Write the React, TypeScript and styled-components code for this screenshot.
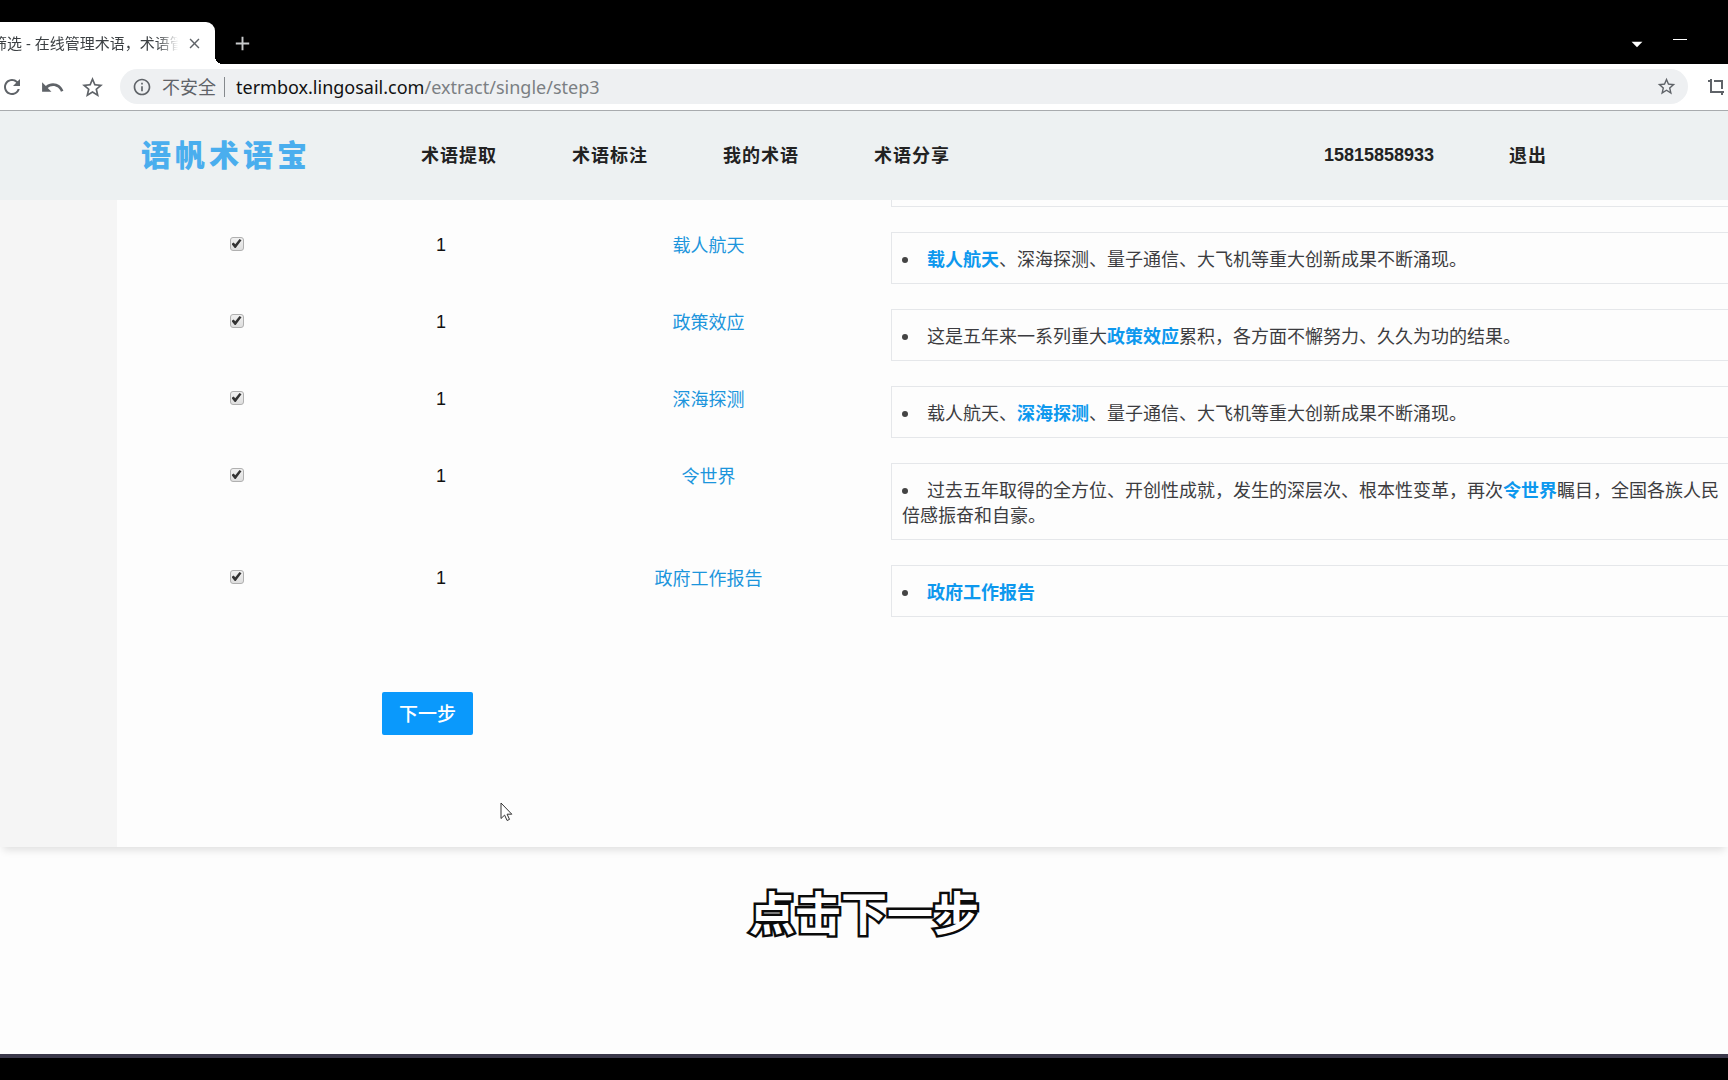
import React from "react";
import styled, { createGlobalStyle } from "styled-components";
import {
  MdAdd,
  MdArrowDropDown,
  MdClose,
  MdInfoOutline,
  MdRefresh,
  MdStarBorder,
  MdUndo,
} from "react-icons/md";

const cjk = `"Noto Sans CJK SC", sans-serif`;

const GlobalStyle = createGlobalStyle`
  *, *::before, *::after { box-sizing: border-box; }
  body {
    margin: 0;
    background: #fdfdfd;
    font-family: "Liberation Sans", ${cjk};
    font-size: 18px;
    line-height: 25px;
    color: #3c3c40;
  }
`;

const Screen = styled.div`
  position: relative;
  display: flex;
  flex-direction: column;
  min-height: 100vh;
  overflow: hidden;
`;

const TabStrip = styled.div`
  display: flex;
  align-items: flex-end;
  height: 64px;
  background: #000;
`;

const Tab = styled.div`
  position: relative;
  display: flex;
  align-items: center;
  height: 42px;
  width: 215px;
  padding-right: 9px;
  background: #fff;
  border-radius: 0 9px 0 0;

  &::after {
    content: "";
    position: absolute;
    left: 100%;
    bottom: 0;
    width: 8px;
    height: 8px;
    background: radial-gradient(circle at 100% 0, transparent 8px, #fff 8px);
  }
`;

const TabTitle = styled.span`
  flex: 1;
  display: flex;
  overflow: hidden;
  white-space: nowrap;
  font: 15px/24px "Noto Sans", ${cjk};
  color: #3c4043;
  mask-image: linear-gradient(90deg, #000 86%, transparent 98%);
`;

const TabText = styled.span`
  margin-left: -8px;
`;

const IconButton = styled.button<{ $size?: number; $color?: string }>`
  display: grid;
  place-items: center;
  flex: none;
  width: ${(p) => p.$size ?? 24}px;
  height: 24px;
  padding: 0;
  border: 0;
  background: none;
  color: ${(p) => p.$color ?? "#5f6368"};
`;

const NewTab = styled.div`
  display: flex;
  align-items: center;
  height: 42px;
  margin-left: 15px;
`;

const WindowControls = styled.div`
  display: flex;
  align-items: center;
  gap: 20px;
  height: 42px;
  margin-left: auto;
  padding-right: 36px;
`;

const MinimizeLine = styled.span`
  width: 14px;
  height: 1px;
  margin-bottom: 8px;
  background: #fff;
`;

const Toolbar = styled.div`
  display: flex;
  align-items: center;
  gap: 16px;
  height: 47px;
  padding-bottom: 1px;
  background: #fff;
  border-bottom: 1px solid #a8abae;
  overflow: hidden;
`;

const ToolbarLeft = styled.div`
  display: flex;
  gap: 16px;
`;

const AddressBar = styled.div`
  flex: 1;
  display: flex;
  align-items: center;
  height: 35px;
  padding: 0 10px 0 12px;
  border-radius: 18px;
  background: #eef0f2;
  font: 18px/24px "Noto Sans", ${cjk};
`;

const Security = styled.span`
  margin-left: 10px;
  padding-right: 8px;
  color: #5f6368;
`;

const Divider = styled.span`
  width: 1px;
  height: 20px;
  margin-right: 11px;
  background: #85898d;
`;

const Url = styled.span`
  flex: 1;
  color: #111;
`;

const UrlPath = styled.span`
  color: #7b7f83;
`;

const SiteHeader = styled.header`
  display: flex;
  align-items: center;
  height: 89px;
  padding: 0 181px 0 141px;
  background: #edf1f2;
`;

const Logo = styled.a`
  margin-right: 110px;
  padding-bottom: 6px;
  font: 900 30px/40px ${cjk};
  letter-spacing: 4px;
  color: #4aaeee;
  text-decoration: none;
`;

const Nav = styled.nav<{ $end?: boolean }>`
  display: flex;
  align-items: center;
  gap: 75px;
  margin-left: ${(p) => (p.$end ? "auto" : "0")};
`;

const NavLink = styled.a`
  padding-bottom: 4px;
  font: 700 18px/28px ${cjk};
  letter-spacing: 1px;
  color: #222;
  text-decoration: none;
`;

const Phone = styled.span`
  font-weight: 700;
  color: #222;
`;

const Page = styled.div`
  display: flex;
  background: #f5f5f5;
  box-shadow: 0 6px 8px -3px rgba(0, 0, 0, 0.12);
`;

const Panel = styled.main`
  flex: 1;
  min-width: 0;
  margin-left: 117px;
  padding-bottom: 112px;
  background: #fdfdfd;
`;

const TermTable = styled.table`
  width: 100%;
  table-layout: fixed;
  border-collapse: collapse;
`;

const Column = styled.col<{ $width?: number }>`
  width: ${(p) => (p.$width ? `${p.$width}px` : "auto")};
`;

const Cell = styled.td`
  padding: 0 0 25px;
  vertical-align: top;
  text-align: center;
`;

const ContextCell = styled(Cell)`
  text-align: left;
`;

const Count = styled(Cell)`
  color: #111;
  line-height: 27px;
`;

const Term = styled.a`
  font-family: ${cjk};
  color: #1c95dc;
  text-decoration: none;
`;

const Check = styled.input`
  appearance: none;
  display: block;
  width: 14px;
  height: 14px;
  margin: 5px auto 0;
  border: 1px solid #b0b0b0;
  border-radius: 3px;
  background: linear-gradient(#f0f0f0, #dedede);

  &:checked::after {
    content: "";
    display: block;
    width: 10px;
    height: 9px;
    margin: 1px;
    background: #333;
    clip-path: polygon(0 55%, 20% 38%, 38% 58%, 80% 0, 100% 14%, 42% 100%, 32% 100%);
  }
`;

const Contexts = styled.ul<{ $tail?: boolean }>`
  margin: 0;
  padding: ${(p) => (p.$tail ? "6px 0 0" : "13px 8px 12px 10px")};
  border: 1px solid #e5e7ea;
  border-width: ${(p) => (p.$tail ? "0 0 1px 1px" : "1px 0 1px 1px")};
  list-style: none;
  font-family: ${cjk};
`;

const Context = styled.li`
  &::before {
    content: "";
    display: inline-block;
    width: 6px;
    height: 6px;
    margin: 0 19px 3px 0;
    border-radius: 50%;
    background: #444;
  }
`;

const Highlight = styled.strong`
  font-weight: 700;
  color: #0d98ee;
`;

const NextButton = styled.button`
  display: block;
  height: 43px;
  margin: 50px 0 0 265px;
  padding: 0 17px 2px;
  border: 0;
  border-radius: 2px;
  background: #0a99fc;
  color: #fff;
  font: 500 19px/41px ${cjk};
`;

const CaptionArea = styled.div`
  flex: 1;
  padding-top: 30px;
  text-align: center;
`;

const Caption = styled.p`
  margin: 0;
  font: 700 46px/66px ${cjk};
  color: #fff;
  -webkit-text-stroke: 5px #0b0b0b;
  paint-order: stroke fill;
`;

const Taskbar = styled.div`
  height: 26px;
  border-top: 4px solid #3b384a;
  background: #000;
`;

const Pointer = styled.svg`
  position: absolute;
  left: 500px;
  top: 802px;
`;

type Row = { term: string; before: string; after: string };

const rows: Row[] = [
  { term: "载人航天", before: "", after: "、深海探测、量子通信、大飞机等重大创新成果不断涌现。" },
  { term: "政策效应", before: "这是五年来一系列重大", after: "累积，各方面不懈努力、久久为功的结果。" },
  { term: "深海探测", before: "载人航天、", after: "、量子通信、大飞机等重大创新成果不断涌现。" },
  {
    term: "令世界",
    before: "过去五年取得的全方位、开创性成就，发生的深层次、根本性变革，再次",
    after: "瞩目，全国各族人民倍感振奋和自豪。",
  },
  { term: "政府工作报告", before: "", after: "" },
];

const navItems = ["术语提取", "术语标注", "我的术语", "术语分享"];

export default function App() {
  return (
    <Screen>
      <GlobalStyle />
      <TabStrip>
        <Tab>
          <TabTitle>
            <TabText>筛选 - 在线管理术语，术语管理</TabText>
          </TabTitle>
          <IconButton aria-label="关闭标签页">
            <MdClose size={17} />
          </IconButton>
        </Tab>
        <NewTab>
          <IconButton aria-label="新标签页" $color="#c8cacc">
            <MdAdd size={23} />
          </IconButton>
        </NewTab>
        <WindowControls>
          <IconButton aria-label="标签列表" $color="#fff">
            <MdArrowDropDown size={26} />
          </IconButton>
          <IconButton aria-label="最小化">
            <MinimizeLine />
          </IconButton>
        </WindowControls>
      </TabStrip>

      <Toolbar>
        <ToolbarLeft>
          <IconButton aria-label="重新加载">
            <MdRefresh size={24} />
          </IconButton>
          <IconButton aria-label="撤销">
            <MdUndo size={25} />
          </IconButton>
          <IconButton aria-label="收藏夹">
            <MdStarBorder size={25} />
          </IconButton>
        </ToolbarLeft>
        <AddressBar>
          <IconButton aria-label="网站信息" $size={20}>
            <MdInfoOutline size={20} />
          </IconButton>
          <Security>不安全</Security>
          <Divider />
          <Url>
            termbox.lingosail.com<UrlPath>/extract/single/step3</UrlPath>
          </Url>
          <IconButton aria-label="收藏此页">
            <MdStarBorder size={21} />
          </IconButton>
        </AddressBar>
        <IconButton aria-label="截图">
          <svg width="18" height="18" viewBox="0 0 18 18" fill="none" stroke="currentColor" strokeWidth="2">
            <path d="M1 3h3M4 1v13h13M7 3h8v8M15 14v3" />
          </svg>
        </IconButton>
      </Toolbar>

      <SiteHeader>
        <Logo href="#">语帆术语宝</Logo>
        <Nav>
          {navItems.map((item) => (
            <NavLink href="#" key={item}>
              {item}
            </NavLink>
          ))}
        </Nav>
        <Nav $end>
          <Phone>15815858933</Phone>
          <NavLink href="#">退出</NavLink>
        </Nav>
      </SiteHeader>

      <Page>
        <Panel>
          <TermTable>
            <colgroup>
              <Column $width={239} />
              <Column $width={170} />
              <Column $width={365} />
              <Column />
            </colgroup>
            <tbody>
              <tr>
                <Cell colSpan={3} />
                <ContextCell>
                  <Contexts $tail />
                </ContextCell>
              </tr>
              {rows.map((row) => (
                <tr key={row.term}>
                  <Cell>
                    <Check type="checkbox" defaultChecked aria-label={row.term} />
                  </Cell>
                  <Count>1</Count>
                  <Cell>
                    <Term href="#">{row.term}</Term>
                  </Cell>
                  <ContextCell>
                    <Contexts>
                      <Context>
                        {row.before}
                        <Highlight>{row.term}</Highlight>
                        {row.after}
                      </Context>
                    </Contexts>
                  </ContextCell>
                </tr>
              ))}
            </tbody>
          </TermTable>
          <NextButton type="button">下一步</NextButton>
        </Panel>
      </Page>

      <CaptionArea>
        <Caption>点击下一步</Caption>
      </CaptionArea>
      <Taskbar />

      <Pointer width="13" height="20" viewBox="0 0 13 20" aria-hidden="true">
        <path
          d="M1 1v15.500l3.600-3.400 2.500 5.400 2.400-1.100-2.400-5.200h4.700z"
          fill="#fff"
          stroke="#333"
          strokeWidth="1"
        />
      </Pointer>
    </Screen>
  );
}
